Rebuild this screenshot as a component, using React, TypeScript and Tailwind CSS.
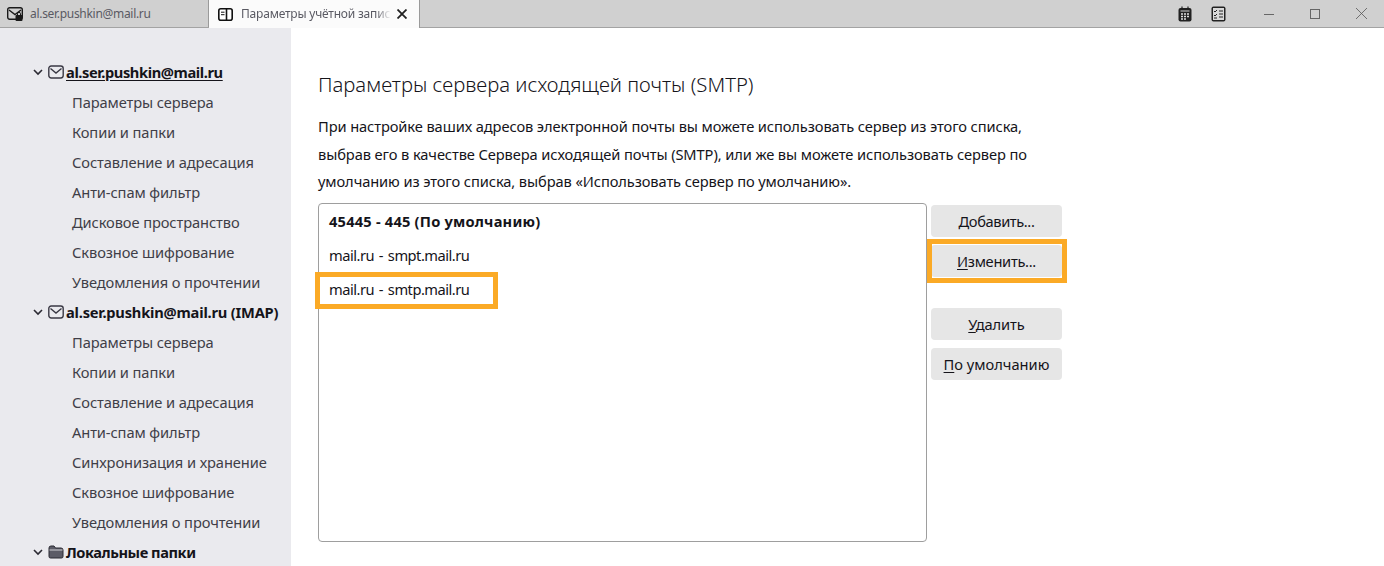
import React from 'react';

const accounts = [
  {
    name: 'al.ser.pushkin@mail.ru',
    selected: true,
    tracking: 'tracking-[-0.4px]',
    items: ['Параметры сервера', 'Копии и папки', 'Составление и адресация', 'Анти-спам фильтр', 'Дисковое пространство', 'Сквозное шифрование', 'Уведомления о прочтении'],
  },
  {
    name: 'al.ser.pushkin@mail.ru (IMAP)',
    selected: false,
    tracking: 'tracking-[-0.2px]',
    items: ['Параметры сервера', 'Копии и папки', 'Составление и адресация', 'Анти-спам фильтр', 'Синхронизация и хранение', 'Сквозное шифрование', 'Уведомления о прочтении'],
  },
];

function Chevron() {
  return (
    <svg className="w-[10px] h-[10px] text-[#2b2a33]" viewBox="0 0 10 10" fill="none" stroke="currentColor" strokeWidth="1.6">
      <path d="M1 3l4 4 4-4" />
    </svg>
  );
}

function MailIcon() {
  return (
    <svg className="w-[16px] h-[14px] text-[#3a3944]" viewBox="0 0 16 14" fill="none" stroke="currentColor" strokeWidth="1.4">
      <rect x="0.8" y="1" width="14.4" height="12" rx="2.4" />
      <path d="M2.5 3.5L8 8l5.5-4.5" />
    </svg>
  );
}

function FolderIcon() {
  return (
    <svg className="w-[16px] h-[14px]" viewBox="0 0 16 14">
      <path d="M1 3a2 2 0 012-2h3l1.5 2H13a2 2 0 012 2v6.5a1.5 1.5 0 01-1.5 1.5h-11A1.5 1.5 0 011 11.5z" fill="#5b5b66" stroke="#2b2a33" strokeWidth="1" />
      <path d="M1.5 5h13" stroke="#d0d0d4" strokeWidth="1" />
    </svg>
  );
}

function AccountHeader({ icon, children, underline, tracking }: { icon: React.ReactNode; children: React.ReactNode; underline?: boolean; tracking: string }) {
  return (
    <div className="h-[30px] flex items-center pl-[33px] text-[#15141a] font-bold">
      <Chevron />
      <span className="ml-[5px] mr-[2px] shrink-0">{icon}</span>
      <span className={`${tracking} ${underline ? 'underline underline-offset-2' : ''}`}>{children}</span>
    </div>
  );
}

function SideButton({ hot, rest, tracking = '' }: { hot: string; rest: string; tracking?: string }) {
  return (
    <button className={`w-[131px] h-[32px] rounded-[4px] bg-[#e6e6e6] text-[#15141a] text-center ${tracking}`}>
      <span className="underline underline-offset-2">{hot}</span>
      {rest}
    </button>
  );
}

export default function App() {
  return (
    <div className="h-[566px] overflow-hidden bg-white text-[14.67px] font-['Noto_Sans',sans-serif] flex flex-col">
      <div className="h-[28px] shrink-0 flex items-stretch bg-[#d0d0d0] border-b border-[#a3a3a3] text-[12px]">
        <div className="w-[209px] flex items-center pl-[7px] border-r border-[#9a9a9a] text-[#5a5a63]">
          <svg className="w-[16px] h-[14px] mr-[7px]" viewBox="0 0 16 14">
            <rect x="0.7" y="0.7" width="14.6" height="11.6" rx="2" fill="#d0d0d0" stroke="#1a1a1a" strokeWidth="1.4" />
            <path d="M2 3l6 4.5L14 3" fill="none" stroke="#1a1a1a" strokeWidth="1.4" />
            <rect x="8.5" y="8" width="7" height="6" rx="1" fill="#1a1a1a" />
            <path d="M10.5 8V6.8a1.5 1.5 0 013 0V8" fill="none" stroke="#1a1a1a" strokeWidth="1" />
          </svg>
          <span className="tracking-[-0.3px]">al.ser.pushkin@mail.ru</span>
        </div>
        <div className="w-[211px] -mb-px bg-[#fbfbfb] border-r border-[#9a9a9a] flex items-center pl-[9px] text-[#5a5a63] overflow-hidden">
          <svg className="w-[15px] h-[13px] mr-[8px] shrink-0" viewBox="0 0 15 13">
            <rect x="0.8" y="0.8" width="13.4" height="11.4" rx="2" fill="#fff" stroke="#111" strokeWidth="1.6" />
            <path d="M8.5 1v11" stroke="#111" strokeWidth="1.6" />
            <path d="M3 4.2h3.5M3 6.7h3.5" stroke="#111" strokeWidth="1" />
          </svg>
          <span className="w-[150px] shrink-0 whitespace-nowrap overflow-hidden tracking-[-0.2px] [mask-image:linear-gradient(to_right,black_90%,transparent)]">Параметры учётной записи</span>
          <svg className="w-[10px] h-[10px] ml-[6px] shrink-0" viewBox="0 0 10 10" stroke="#222" strokeWidth="1.8">
            <path d="M0.5 0.5l9 9M9.5 0.5l-9 9" />
          </svg>
        </div>
        <div className="flex-1" />
        <div className="flex items-center pr-[17px]">
          <svg className="w-[14px] h-[16px] mr-[19px]" viewBox="0 0 14 16">
            <rect x="0.5" y="2" width="13" height="13.5" rx="2" fill="#222" />
            <path d="M4 0.5v3M10 0.5v3" stroke="#222" strokeWidth="1.2" />
            <path d="M2.5 5h9" stroke="#d0d0d0" strokeWidth="1" />
            <path d="M3 8h2M6 8h2M9 8h2M3 10.5h2M6 10.5h2M9 10.5h2M3 13h2M6 13h2" stroke="#ddd" strokeWidth="1.3" />
          </svg>
          <svg className="w-[15px] h-[16px] mr-[38px]" viewBox="0 0 15 16">
            <rect x="0.5" y="0.5" width="14" height="15" rx="2" fill="#222" />
            <rect x="2" y="2" width="11" height="12" fill="#d8d8d8" />
            <path d="M3 5l1 1 2-2M3 9l1 1 2-2" fill="none" stroke="#222" strokeWidth="1" />
            <path d="M8 5h4M8 8h4M8 11h4M3 12h3" stroke="#222" strokeWidth="1" />
          </svg>
          <svg className="w-[10px] h-[10px] mr-[36px]" viewBox="0 0 10 10" stroke="#666" strokeWidth="1">
            <path d="M0 5.5h10" />
          </svg>
          <svg className="w-[10px] h-[10px] mr-[36px]" viewBox="0 0 10 10" fill="none" stroke="#666" strokeWidth="1">
            <rect x="0.5" y="0.5" width="9" height="9" />
          </svg>
          <svg className="w-[11px] h-[11px]" viewBox="0 0 11 11" stroke="#555" strokeWidth="0.8">
            <path d="M0 0l11 11M11 0L0 11" />
          </svg>
        </div>
      </div>

      <div className="flex flex-1 min-h-0">
        <aside className="w-[291px] shrink-0 bg-[#eaeaee] pt-[29px]">
          {accounts.map((a) => (
            <div key={a.name}>
              <AccountHeader icon={<MailIcon />} underline={a.selected} tracking={a.tracking}>{a.name}</AccountHeader>
              {a.items.map((item) => (
                <div key={item} className="h-[30px] flex items-center pl-[72px] text-[#3f3e47] tracking-[-0.1px]">{item}</div>
              ))}
            </div>
          ))}
          <AccountHeader icon={<FolderIcon />} tracking="tracking-[-0.45px]">Локальные папки</AccountHeader>
        </aside>

        <main className="flex-1 pl-[27px] pt-[41px] text-[#15141a]">
          <h1 className="text-[20.3px] font-light leading-[30px] text-[#15141a]">Параметры сервера исходящей почты (SMTP)</h1>
          <p className="mt-[14px] leading-[27.5px] w-[740px] tracking-[-0.1px]">
            При настройке ваших адресов электронной почты вы можете использовать сервер из этого списка,
            <br />
            выбрав его в качестве Сервера исходящей почты (SMTP), или же вы можете использовать сервер по
            <br />
            умолчанию из этого списка, выбрав «Использовать сервер по умолчанию».
          </p>

          <div className="mt-[7px] flex items-start">
            <div className="w-[609px] h-[339px] border border-[#9e9e9e] rounded-[4px] pl-[10px]">
              <div className="h-[35px] flex items-center font-bold tracking-[0.2px]">45445 - 445 (По умолчанию)</div>
              <div className="h-[33px] flex items-center tracking-[-0.5px] [word-spacing:1.5px]">mail.ru - smpt.mail.ru</div>
              <div className="relative h-[35px] flex items-center tracking-[-0.5px] [word-spacing:1.5px]">
                mail.ru - smtp.mail.ru
                <div className="absolute left-[-14px] top-0 w-[183px] h-[37px] border-[5px] border-[#fbaa26]" />
              </div>
            </div>

            <div className="ml-[4px] pt-[2px] flex flex-col">
              <SideButton hot="Д" rest="обавить..." tracking="tracking-[-0.4px]" />
              <div className="relative mt-[8px]">
                <SideButton hot="И" rest="зменить..." tracking="tracking-[-0.3px]" />
                <div className="absolute left-[-4px] top-[-6px] w-[140px] h-[44px] border-[5px] border-[#fbaa26]" />
              </div>
              <div className="mt-[31px]">
                <SideButton hot="У" rest="далить" tracking="tracking-[-0.1px]" />
              </div>
              <div className="mt-[8px]">
                <SideButton hot="П" rest="о умолчанию" />
              </div>
            </div>
          </div>
        </main>
      </div>
    </div>
  );
}
